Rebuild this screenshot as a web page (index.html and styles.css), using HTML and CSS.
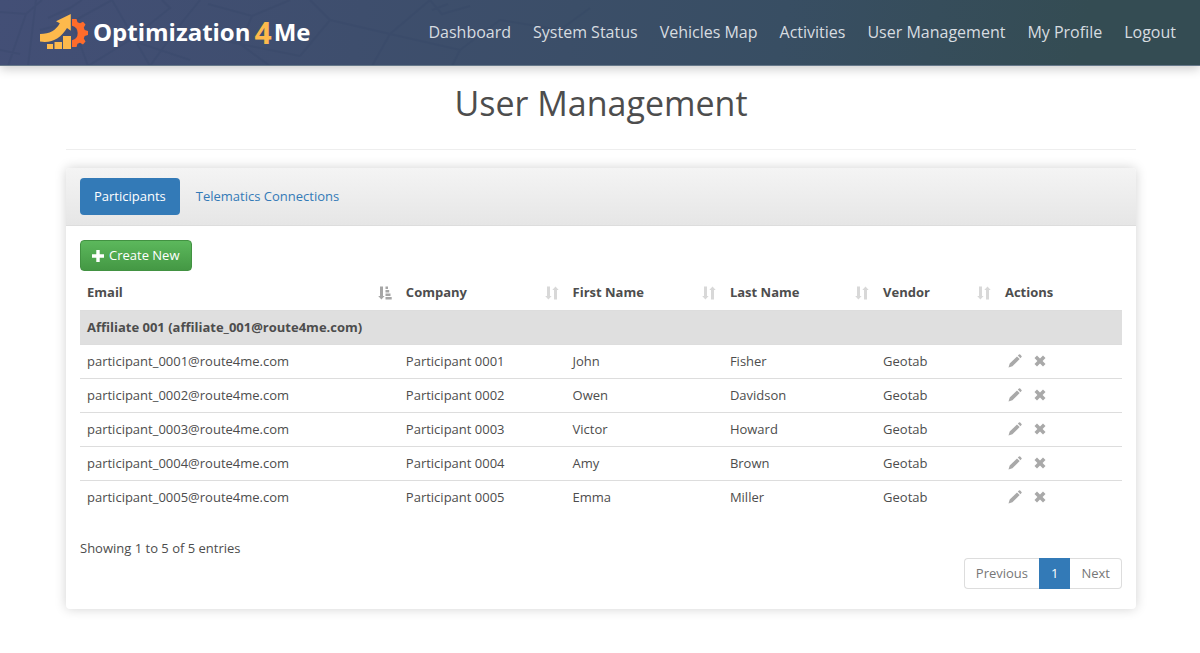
FILE: index.html
```html
<!DOCTYPE html>
<html lang="en">
<head>
<meta charset="utf-8">
<meta name="viewport" content="width=device-width, initial-scale=1">
<title>User Management</title>
<link rel="stylesheet" href="styles.css">
</head>
<body>
<svg class="sprite" aria-hidden="true">
  <symbol id="pencil" viewBox="0 0 14 14"><path d="M0.5 13.5L1.7 9.5L9 2.4L11.7 5.1L4.4 12.3ZM9.8 1.6L11 0.5Q11.6 0 12.2 0.6L13.5 1.9Q14 2.5 13.5 3.1L12.4 4.2Z"/></symbol>
  <symbol id="cross" viewBox="0 0 12 12"><path d="M3 0.5L6 3.4L9 0.5L11.5 3L8.6 6L11.5 9L9 11.5L6 8.6L3 11.5L0.5 9L3.4 6L0.5 3Z"/></symbol>
  <symbol id="sort" viewBox="0 0 14 14"><path d="M2 0.5H5V10H6.6L3.4 13.6L0.2 10H2ZM9 13.5H12V4H13.7L10.5 0.4L7.3 4H9Z"/></symbol>
  <symbol id="sort-asc" viewBox="0 0 14 14"><path d="M2 0.5H5V10H6.6L3.4 13.6L0.2 10H2ZM7.5 0.5H10V3H7.5ZM7.5 4H11.2V6.5H7.5ZM7.5 7.5H12.5V10H7.5ZM7.5 11H13.7V13.5H7.5Z"/></symbol>
</svg>

<header class="topbar">
  <svg class="streets" viewBox="0 0 600 66" preserveAspectRatio="xMinYMin slice" aria-hidden="true">
    <path d="M0 12L26 14L42 0M26 14L8 66M36 0L28 66M0 50L20 54M48 18L70 8L82 0M40 30L72 22L88 66M72 22L112 0M112 0L150 66M88 66L130 40L170 8L162 0M130 40L190 60M150 66L176 30L240 44L270 66M176 30L200 0M208 4L252 16L290 0M252 16L240 44L300 56M300 56L330 20L310 0M330 20L390 34L372 66M390 34L430 0M432 10L448 4M430 0L442 14L470 6M390 34L460 50L500 20M460 50L452 66M500 20L560 30L590 8"/>
  </svg>
  <a class="brand" href="#">
    <svg class="brand-mark" viewBox="0 0 48 36" aria-hidden="true">
      <path fill="#ff6c2b" d="M32 5H36.5L37.5 8.3L40 9.3L43 7.7L45.5 10.4L43.8 13.5L44.7 16L48 17V21L44.7 22L43.8 24.5L45.5 27.5L43 30.4L40 28.8L37.5 29.8L36.5 33H32V26.2A7.4 7.4 0 0 0 32 11.8Z"/>
      <path fill="#fdb94c" d="M0 20C10 20 16 16 19.8 9.2L16 7.2L30.8 0V16.8L27 14C21 24 12 29.5 0 27.5ZM7 30H13V35H7ZM14.5 28H22V35H14.5ZM23 22H31V35H23Z"/>
    </svg>
    <span class="brand-text">Optimization<span class="brand-four">4</span>Me</span>
  </a>
  <nav class="nav" aria-label="Main">
    <a href="#">Dashboard</a>
    <a href="#">System Status</a>
    <a href="#">Vehicles Map</a>
    <a href="#">Activities</a>
    <a href="#">User Management</a>
    <a href="#">My Profile</a>
    <a href="#">Logout</a>
  </nav>
</header>

<main class="page">
  <h1 class="title">User Management</h1>
  <section class="panel">
    <div class="tabs">
      <a class="tab tab-active" href="#">Participants</a>
      <a class="tab" href="#">Telematics Connections</a>
    </div>
    <div class="content">
      <button class="create" type="button">
        <svg class="plus" viewBox="0 0 12 12" aria-hidden="true"><path d="M4.3 0H7.7V4.3H12V7.7H7.7V12H4.3V7.7H0V4.3H4.3Z"/></svg>
        Create New
      </button>
      <table class="users">
        <colgroup><col class="c-email"><col class="c-company"><col class="c-first"><col class="c-last"><col class="c-vendor"><col></colgroup>
        <thead>
          <tr>
            <th scope="col"><div class="head">Email<svg class="sort sorted"><use href="#sort-asc"/></svg></div></th>
            <th scope="col"><div class="head">Company<svg class="sort"><use href="#sort"/></svg></div></th>
            <th scope="col"><div class="head">First Name<svg class="sort"><use href="#sort"/></svg></div></th>
            <th scope="col"><div class="head">Last Name<svg class="sort"><use href="#sort"/></svg></div></th>
            <th scope="col"><div class="head">Vendor<svg class="sort"><use href="#sort"/></svg></div></th>
            <th scope="col">Actions</th>
          </tr>
        </thead>
        <tbody>
          <tr class="group"><th colspan="6" scope="rowgroup">Affiliate 001 (affiliate_001@route4me.com)</th></tr>
          <tr><td>participant_0001@route4me.com</td><td>Participant 0001</td><td>John</td><td>Fisher</td><td>Geotab</td><td><div class="actions"><button type="button" aria-label="Edit"><svg class="pencil"><use href="#pencil"/></svg></button><button type="button" aria-label="Delete"><svg class="cross"><use href="#cross"/></svg></button></div></td></tr>
          <tr><td>participant_0002@route4me.com</td><td>Participant 0002</td><td>Owen</td><td>Davidson</td><td>Geotab</td><td><div class="actions"><button type="button" aria-label="Edit"><svg class="pencil"><use href="#pencil"/></svg></button><button type="button" aria-label="Delete"><svg class="cross"><use href="#cross"/></svg></button></div></td></tr>
          <tr><td>participant_0003@route4me.com</td><td>Participant 0003</td><td>Victor</td><td>Howard</td><td>Geotab</td><td><div class="actions"><button type="button" aria-label="Edit"><svg class="pencil"><use href="#pencil"/></svg></button><button type="button" aria-label="Delete"><svg class="cross"><use href="#cross"/></svg></button></div></td></tr>
          <tr><td>participant_0004@route4me.com</td><td>Participant 0004</td><td>Amy</td><td>Brown</td><td>Geotab</td><td><div class="actions"><button type="button" aria-label="Edit"><svg class="pencil"><use href="#pencil"/></svg></button><button type="button" aria-label="Delete"><svg class="cross"><use href="#cross"/></svg></button></div></td></tr>
          <tr><td>participant_0005@route4me.com</td><td>Participant 0005</td><td>Emma</td><td>Miller</td><td>Geotab</td><td><div class="actions"><button type="button" aria-label="Edit"><svg class="pencil"><use href="#pencil"/></svg></button><button type="button" aria-label="Delete"><svg class="cross"><use href="#cross"/></svg></button></div></td></tr>
        </tbody>
      </table>
      <p class="summary">Showing 1 to 5 of 5 entries</p>
      <nav class="pager" aria-label="Pages">
        <a href="#">Previous</a>
        <a class="current" href="#" aria-current="page">1</a>
        <a href="#">Next</a>
      </nav>
    </div>
  </section>
</main>
</body>
</html>
```

FILE: styles.css
```css
* {
  box-sizing: border-box;
}

body {
  margin: 0;
  background: #fff;
  color: #4d4d4d;
  font: 13px/19px "Open Sans", "Noto Sans", sans-serif;
}

a {
  text-decoration: none;
}

.sprite {
  position: absolute;
  width: 0;
  height: 0;
}

.topbar {
  position: relative;
  display: flex;
  align-items: center;
  justify-content: space-between;
  min-height: 66px;
  padding: 0 24px 1px 40px;
  border-bottom: 1px solid #67798a;
  background: linear-gradient(100deg, #434f76 0%, #3e4e6d 30%, #384e63 65%, #344c53 90%, #344c53 100%);
  box-shadow: 0 3px 10px rgba(0, 0, 0, 0.2);
}

.streets {
  position: absolute;
  left: 0;
  top: 0;
  width: 50%;
  height: 100%;
  fill: none;
  stroke: #2d3f61;
  stroke-width: 2;
  opacity: 0.16;
}

.brand {
  position: relative;
  display: flex;
  align-items: center;
  gap: 5px;
}

.brand-mark {
  width: 48px;
  height: 36px;
}

.brand-text {
  color: #fff;
  font-size: 24px;
  font-weight: 700;
  line-height: 36px;
}

.brand-four {
  margin: 0 2px 0 4px;
  color: #fdb94c;
  font-size: 30px;
  line-height: 30px;
  vertical-align: -3px;
}

.nav {
  position: relative;
  display: flex;
  gap: 22px;
}

.nav a {
  color: #d7dce0;
  font-size: 16px;
  line-height: 24px;
}

.page {
  padding: 0 64px 43px 66px;
}

.title {
  margin: 0 0 18px;
  padding: 13px 0 22px;
  border-bottom: 1px solid #eee;
  font-size: 34px;
  font-weight: 400;
  line-height: 48px;
  text-align: center;
}

.panel {
  border-radius: 4px;
  background: #fff;
  box-shadow: 0 0 12px rgba(0, 0, 0, 0.18);
}

.tabs {
  display: flex;
  gap: 2px;
  padding: 10px 14px;
  border-bottom: 1px solid #ddd;
  border-radius: 4px 4px 0 0;
  background: linear-gradient(#f4f4f4, #e6e6e6);
}

.tab {
  padding: 9px 14px;
  border-radius: 4px;
  color: #337ab7;
}

.tab-active {
  background: #337ab7;
  color: #fff;
}

.content {
  padding: 14px 14px 20px;
}

.create {
  display: flex;
  align-items: center;
  gap: 5px;
  padding: 5px 11px;
  border: 1px solid #429242;
  border-radius: 4px;
  background: linear-gradient(#5cb85c, #449844);
  color: #fff;
  font: inherit;
}

.plus {
  width: 12px;
  height: 12px;
  fill: #fff;
}

.users {
  width: 100%;
  margin-top: 5px;
  border-collapse: collapse;
  table-layout: fixed;
}

.c-email { width: 30.6%; }
.c-company { width: 16%; }
.c-first { width: 15.1%; }
.c-last { width: 14.7%; }
.c-vendor { width: 11.7%; }

.users th,
.users td {
  height: 34px;
  padding: 0 7px;
  text-align: left;
  border-bottom: 1px solid #ddd;
}

.users tr:last-child td {
  border-bottom: 0;
}

.users .group th {
  background: #dfdfdf;
}

.head {
  display: flex;
  align-items: center;
  justify-content: space-between;
}

.sort {
  width: 14px;
  height: 14px;
  fill: #d8d8d8;
}

.sorted {
  fill: #a6a6a6;
}

.actions {
  display: flex;
  align-items: center;
  gap: 12px;
  padding-left: 3px;
}

.actions button {
  display: flex;
  padding: 0;
  border: 0;
  background: none;
}

.actions svg {
  fill: #a9a9a9;
}

.pencil {
  width: 14px;
  height: 14px;
}

.cross {
  width: 12px;
  height: 12px;
}

.summary {
  margin: 25px 0 0;
}

.pager {
  display: flex;
  justify-content: flex-end;
}

.pager a {
  padding: 5px 11px;
  border: 1px solid #ddd;
  color: #777;
}

.pager a:first-child {
  border-right: 0;
  border-radius: 4px 0 0 4px;
}

.pager a:last-child {
  border-left: 0;
  border-radius: 0 4px 4px 0;
}

.pager .current {
  border-color: #337ab7;
  background: #337ab7;
  color: #fff;
}
```
